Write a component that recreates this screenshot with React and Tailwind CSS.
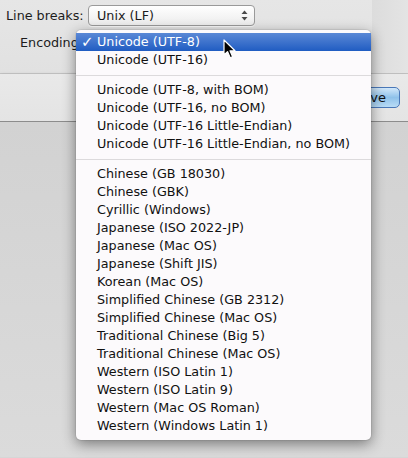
import React from "react";

const groups = [
  ["Unicode (UTF-8)", "Unicode (UTF-16)"],
  [
    "Unicode (UTF-8, with BOM)",
    "Unicode (UTF-16, no BOM)",
    "Unicode (UTF-16 Little-Endian)",
    "Unicode (UTF-16 Little-Endian, no BOM)",
  ],
  [
    "Chinese (GB 18030)",
    "Chinese (GBK)",
    "Cyrillic (Windows)",
    "Japanese (ISO 2022-JP)",
    "Japanese (Mac OS)",
    "Japanese (Shift JIS)",
    "Korean (Mac OS)",
    "Simplified Chinese (GB 2312)",
    "Simplified Chinese (Mac OS)",
    "Traditional Chinese (Big 5)",
    "Traditional Chinese (Mac OS)",
    "Western (ISO Latin 1)",
    "Western (ISO Latin 9)",
    "Western (Mac OS Roman)",
    "Western (Windows Latin 1)",
  ],
];

const font = { fontFamily: '"DejaVu Sans", "Noto Sans", sans-serif' };

function Row({ label, selected }) {
  if (selected) {
    return (
      <div className="flex h-[18px] items-center bg-gradient-to-b from-[#5a88d6] to-[#1f5cc2] text-white">
        <span className="w-[21px] pl-[5px] text-[15px] font-bold leading-none">✓</span>
        <span className="text-[12.75px] leading-none">{label}</span>
      </div>
    );
  }
  return (
    <div className="flex h-[18px] items-center text-[#111111]">
      <span className="w-[21px]" />
      <span className="text-[12.75px] leading-none">{label}</span>
    </div>
  );
}

export default function App() {
  return (
    <div className="relative h-[458px] w-[408px] overflow-hidden bg-[#d6d6d6]" style={font}>
      {/* top area */}
      <div className="flex h-[74px] border-b border-[#c6c6c6] bg-gradient-to-b from-[#e6e6e6] to-[#e1e1e1]">
        <div className="flex-1">
          <div className="flex items-center pt-[5px]">
            <span className="w-[88px] pl-[6px] text-[12.75px] text-[#1c1c1c]">Line breaks:</span>
            <div className="flex h-[21px] w-[167px] items-center justify-between rounded-[4px] border border-[#9a9a9a] bg-gradient-to-b from-[#ffffff] to-[#ececec] pl-[8px] pr-[6px] shadow-[0_1px_0_rgba(255,255,255,0.7)]">
              <span className="text-[12.75px] text-[#1c1c1c]">Unix (LF)</span>
              <svg width="7" height="11" viewBox="0 0 7 11">
                <path d="M3.5 0.5 L6.5 4 H0.5 Z" fill="#4a4a4a" />
                <path d="M3.5 10.5 L6.5 7 H0.5 Z" fill="#4a4a4a" />
              </svg>
            </div>
          </div>
          <div className="flex items-center pt-[7px]">
            <span className="pl-[20px] text-[12.75px] text-[#1c1c1c]">Encoding</span>
          </div>
        </div>
        <div className="w-[36px] bg-gradient-to-r from-[#dcdcdc] to-[#e4e4e4]" />
      </div>
      {/* button strip */}
      <div className="flex h-[48px] items-start justify-end border-b border-[#8c8c8c] bg-gradient-to-b from-[#e9e9e9] to-[#e4e4e4] pr-[8px] pt-[13px] shadow-[0_2px_4px_rgba(0,0,0,0.35)]">
        <div className="flex h-[21px] w-[70px] items-center justify-center rounded-[5px] border border-[#4a78b8] bg-gradient-to-b from-[#d2e8fa] via-[#8fc2ea] to-[#b9dcf6] pl-[10px] text-[13px] text-[#111]">
          Save
        </div>
      </div>
      {/* lower background */}
      <div className="h-[335px] bg-gradient-to-b from-[#d2d2d2] to-[#dbdbdb]" />

      {/* popup menu */}
      <div className="absolute left-[76px] top-[30px] w-[295px] rounded-[5px] bg-[#fcfafc] pb-[5px] pt-[3px] shadow-[0_4px_14px_rgba(0,0,0,0.45),0_0_0_1px_rgba(0,0,0,0.06)]">
        {groups.map((g, gi) => (
          <div key={gi}>
            {gi > 0 && (
              <div className="flex h-[12px] items-center">
                <div className="h-px w-full bg-[#dcdadc]" />
              </div>
            )}
            {g.map((label, i) => (
              <Row key={label} label={label} selected={gi === 0 && i === 0} />
            ))}
          </div>
        ))}
      </div>

      {/* mouse cursor */}
      <svg className="absolute left-[223px] top-[39px]" width="14" height="21" viewBox="0 0 14 21">
        <path
          d="M1 1 L1 16 L4.5 12.6 L7.2 18.8 L9.6 17.8 L7 11.8 L12 11.8 Z"
          fill="#000"
          stroke="#fff"
          strokeWidth="1.2"
          strokeLinejoin="round"
        />
      </svg>
    </div>
  );
}
